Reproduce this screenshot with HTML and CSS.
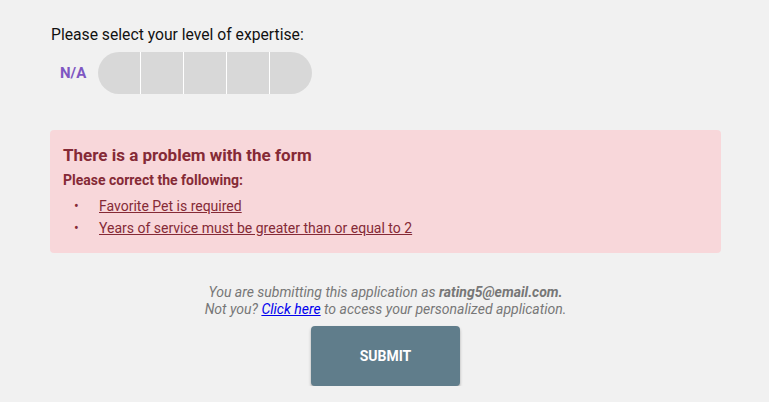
FILE: index.html
```html
<!DOCTYPE html>
<html lang="en">
<head>
  <meta charset="UTF-8" />
  <title>Application</title>
  <link rel="stylesheet" href="styles.css">
</head>
<body>
  <div class="page">
    <div class="field">
      <label class="field-label">Please select your level of expertise:</label>
      <div class="rating">
        <span class="rating-value">N/A</span>
        <div class="rating-bar">
          <button class="rating-step"></button>
          <button class="rating-step"></button>
          <button class="rating-step"></button>
          <button class="rating-step"></button>
          <button class="rating-step"></button>
        </div>
      </div>
    </div>

    <div class="alert">
      <h3 class="alert-title">There is a problem with the form</h3>
      <p class="alert-sub">Please correct the following:</p>
      <ul class="alert-list">
        <li><a href="#">Favorite Pet is required</a></li>
        <li><a href="#">Years of service must be greater than or equal to 2</a></li>
      </ul>
    </div>

    <div class="submit-area">
      <p class="submit-note">You are submitting this application as <b>rating5@email.com.</b><br>
        Not you? <a href="#">Click here</a> to access your personalized application.</p>
      <button class="submit-btn">SUBMIT</button>
    </div>
  </div>
</body>
</html>
```

FILE: styles.css
```css
* { box-sizing: border-box; margin: 0; padding: 0; }
body { font-family: Roboto, "Liberation Sans", sans-serif; background: #f1f1f1; color: #111; }
.page { width: 671px; margin-left: 50px; padding-top: 25px; }

.field { padding-left: 1px; }
.field-label { display: block; font-size: 15.7px; line-height: 20px; }
.rating { display: flex; align-items: center; margin-top: 7px; }
.rating-value { width: 47px; padding-left: 9px; font-size: 15px; font-weight: 700; color: #7e57c2; }
.rating-bar { display: flex; height: 42px; border-radius: 21px; overflow: hidden; }
.rating-step { width: 43px; height: 42px; border: none; background: #d8d8d8; border-left: 1px solid #fff; cursor: pointer; }
.rating-step:first-child { border-left: none; width: 42px; }

.alert {
  margin-top: 36px;
  height: 123px;
  padding: 15px 13px;
  background: #f8d7da;
  border-radius: 4px;
  color: #852a36;
}
.alert-title { font-size: 17px; line-height: 20px; font-weight: 700; }
.alert-sub { margin-top: 6px; font-size: 14px; line-height: 18px; font-weight: 700; }
.alert-list { list-style: none; margin-top: 6px; }
.alert-list li { position: relative; padding-left: 36px; font-size: 14px; line-height: 22px; }
.alert-list li::before { content: "\2022"; position: absolute; left: 11px; }
.alert-list a { color: #852a36; }

.submit-area { text-align: center; margin-top: 31px; }
.submit-note { font-size: 14px; line-height: 17px; font-style: italic; color: #777; }
.submit-note b { font-weight: 700; }
.submit-note a { color: #0000ee; }
.submit-btn {
  margin-top: 8px;
  width: 149px;
  height: 60px;
  border: none;
  border-radius: 4px;
  background: #607d8b;
  color: #fff;
  font-family: inherit;
  font-size: 14px;
  font-weight: 700;
  box-shadow: 0 2px 3px rgba(0, 0, 0, 0.3);
  cursor: pointer;
}
```
